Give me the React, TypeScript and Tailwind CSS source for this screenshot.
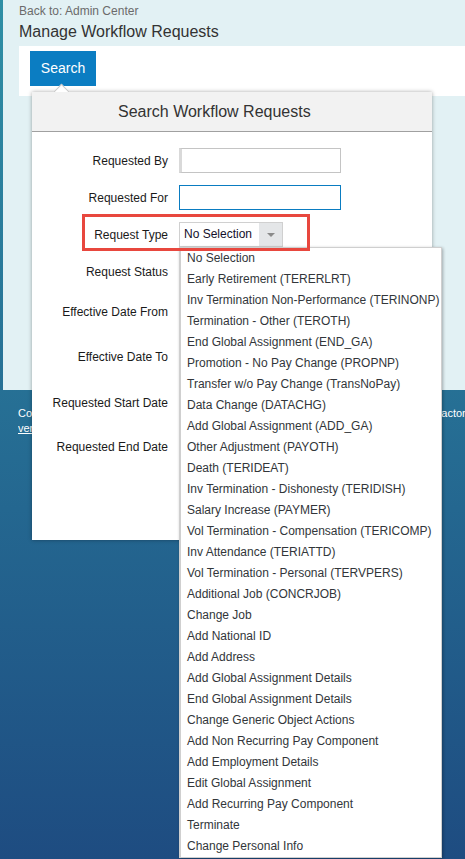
import { ChevronDown } from 'lucide-react'

const requestTypes = [
  'No Selection',
  'Early Retirement (TERERLRT)',
  'Inv Termination Non-Performance (TERINONP)',
  'Termination - Other (TEROTH)',
  'End Global Assignment (END_GA)',
  'Promotion - No Pay Change (PROPNP)',
  'Transfer w/o Pay Change (TransNoPay)',
  'Data Change (DATACHG)',
  'Add Global Assignment (ADD_GA)',
  'Other Adjustment (PAYOTH)',
  'Death (TERIDEAT)',
  'Inv Termination - Dishonesty (TERIDISH)',
  'Salary Increase (PAYMER)',
  'Vol Termination - Compensation (TERICOMP)',
  'Inv Attendance (TERIATTD)',
  'Vol Termination - Personal (TERVPERS)',
  'Additional Job (CONCRJOB)',
  'Change Job',
  'Add National ID',
  'Add Address',
  'Add Global Assignment Details',
  'End Global Assignment Details',
  'Change Generic Object Actions',
  'Add Non Recurring Pay Component',
  'Add Employment Details',
  'Edit Global Assignment',
  'Add Recurring Pay Component',
  'Terminate',
  'Change Personal Info',
]

function Label({ children }: { children: React.ReactNode }) {
  return <div className="w-[136px] shrink-0 text-right text-[12px] text-[#1a1a1a]">{children}</div>
}

function TextInput({ focused }: { focused?: boolean }) {
  return (
    <div
      className={
        focused
          ? 'h-[25px] w-[162px] border border-[#0a7cc1] bg-white'
          : 'h-[25px] w-[162px] border border-[#c4c4c4] border-l-[3px] border-l-[#d9d9d9] bg-white'
      }
    />
  )
}

function Select({ value, width = 'w-[104px]' }: { value: string; width?: string }) {
  return (
    <div className={`flex h-[25px] ${width} border border-[#d0d0d0] bg-white`}>
      <div className="flex-1 pl-[4px] text-[12px] leading-[23px] text-[#14102a]">{value}</div>
      <div className="flex w-[23px] items-center justify-center bg-[#e4e6e8]">
        <div className="h-0 w-0 border-x-[4px] border-t-[4px] border-x-transparent border-t-[#8a8a8a]" />
      </div>
    </div>
  )
}

function DateInput() {
  return (
    <div className="flex h-[25px] w-[130px] border border-[#c4c4c4] bg-white">
      <div className="flex-1" />
      <div className="flex w-[23px] items-center justify-center bg-[#e4e6e8]">
        <ChevronDown size={12} className="text-[#777]" />
      </div>
    </div>
  )
}

export default function App() {
  return (
    <div className="relative h-[859px] w-[465px] overflow-hidden bg-gradient-to-b from-[#2f8fa5] to-[#1e4c81] font-['Liberation_Sans',Arial,sans-serif]">
      {/* page header area */}
      <div className="ml-[3px] h-[390px] bg-[#e2f1f4] pl-[16px] pt-[4px]">
        <div className="text-[12px] leading-[15px] text-[#6b6b6b]">Back to: Admin Center</div>
        <h1 className="mt-[3px] text-[16px] leading-[20px] text-[#333]">Manage Workflow Requests</h1>
        <div className="mt-[4px] h-[50px] bg-white pl-[11px] pt-[5px]">
          <button className="h-[35px] w-[66px] bg-[#0b7dc2] text-[14px] text-white">Search</button>
        </div>
      </div>

      {/* footer */}
      <div className="grid grid-cols-[375px_auto] overflow-hidden whitespace-nowrap pl-[18px] pt-[16px] text-[11px] leading-[15px] text-white">
        <div className="overflow-hidden">
          <div>Copyright © 2020 SAP SE or an SAP affiliate company.</div>
          <div className="underline">version info</div>
        </div>
        <div>SuccessFactors</div>
      </div>

      {/* popover */}
      <div className="absolute left-[32px] top-[92px] h-[448px] w-[400px] bg-white shadow-[0_0_4px_rgba(0,0,0,0.35)]">
        <div className="absolute -top-[6px] left-[24px] h-[11px] w-[11px] rotate-45 border-l border-t border-[#c8c8c8] bg-white" />
        <div className="relative h-[40px] border-b border-[#a0a0a0] bg-[#f2f2f2] pl-[86px] text-[16px] leading-[39px] text-[#333]">
          Search Workflow Requests
        </div>
        <div className="pt-[10px]">
          <div className="flex h-[37px] items-center gap-[11px]">
            <Label>Requested By</Label>
            <TextInput />
          </div>
          <div className="flex h-[37px] items-center gap-[11px]">
            <Label>Requested For</Label>
            <TextInput focused />
          </div>
          <div className="flex h-[37px] items-center gap-[11px]">
            <Label>Request Type</Label>
            <Select value="No Selection" />
          </div>
          <div className="flex h-[37px] items-center gap-[11px]">
            <Label>Request Status</Label>
            <Select value="No Selection" />
          </div>
          <div className="flex h-[44px] items-center gap-[11px]">
            <Label>Effective Date From</Label>
            <DateInput />
          </div>
          <div className="flex h-[46px] items-center gap-[11px]">
            <Label>Effective Date To</Label>
            <DateInput />
          </div>
          <div className="flex h-[46px] items-center gap-[11px]">
            <Label>Requested Start Date</Label>
            <DateInput />
          </div>
          <div className="flex h-[42px] items-center gap-[11px]">
            <Label>Requested End Date</Label>
            <DateInput />
          </div>
        </div>
      </div>

      {/* open dropdown list */}
      <ul className="absolute left-[179px] top-[247px] w-[263px] border border-l-2 border-[#cfcfcf] bg-white shadow-[1px_1px_3px_rgba(0,0,0,0.3)]">
        {requestTypes.map((t) => (
          <li key={t} className="h-[21px] whitespace-nowrap pl-[6px] text-[12px] leading-[21px] text-[#32363a]">
            {t}
          </li>
        ))}
      </ul>

      {/* highlight box */}
      <div className="absolute left-[82px] top-[214px] h-[37px] w-[228px] border-[3px] border-[#e8473e]" />
    </div>
  )
}
